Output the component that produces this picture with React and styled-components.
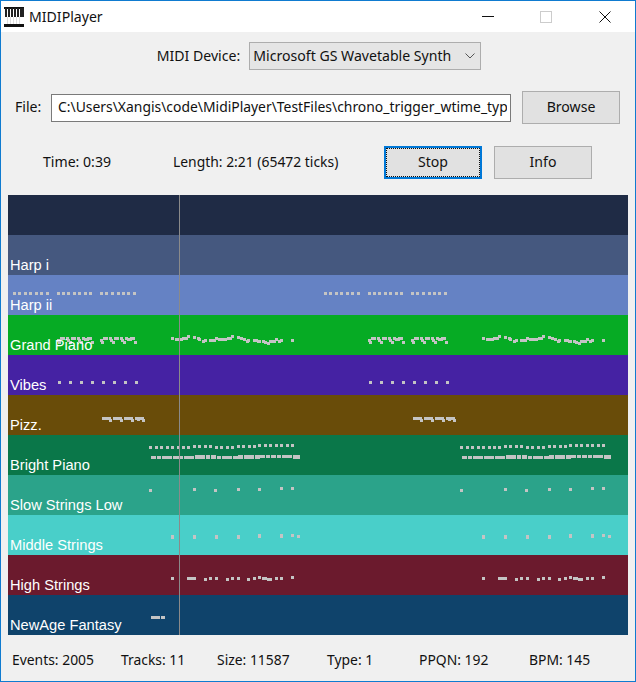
import React from "react"
import styled, { createGlobalStyle } from "styled-components"

const GlobalStyle = createGlobalStyle`
  html, body {
    margin: 0;
    padding: 0;
    background: #f0f0f0;
  }
  * {
    box-sizing: border-box;
  }
`

const single = (x, y) => ({ x, y })

const LOOP_SHIFT = 311

const gridNotes = (xs, y, w = 3, h = 3) => xs.map(x => ({ x, y, w, h }))

const harpNotes = gridNotes(
  [324, 329, 335, 340, 346, 351, 357, 368, 373, 378, 384, 389, 395, 400, 411, 416, 422, 428, 433, 438, 444],
  17
)

const vibesNotes = gridNotes([369, 380, 391, 402, 413, 424, 435, 446], 26)

const pianoRun = [
  single(368, 24), single(369, 26), { x: 371, y: 22, w: 5 }, single(377, 22),
  single(378, 24), single(380, 26), { x: 382, y: 22, w: 5 }, single(388, 22),
  single(389, 24), single(391, 26), single(393, 22), { x: 395, y: 23, w: 5 },
  { x: 398, y: 22, w: 5 }, single(402, 26),
]

const grandNotes = [
  ...pianoRun,
  ...pianoRun.map(n => ({ ...n, x: n.x + 43 })),
  single(482, 22), { x: 486, y: 23, w: 8 }, { x: 493, y: 22, w: 6 }, single(498, 20),
  single(504, 21), single(508, 22), single(509, 23), single(513, 25), single(515, 24),
  { x: 520, y: 24, w: 7 }, single(526, 22), { x: 529, y: 23, w: 9 }, { x: 538, y: 22, w: 5 },
  single(542, 20), single(548, 21), single(551, 22), single(554, 23), single(557, 25),
  single(558, 24), { x: 564, y: 24, w: 5 }, { x: 568, y: 25, w: 4 }, single(573, 25),
  single(575, 26), single(578, 27), { x: 580, y: 25, w: 7 }, single(586, 23),
  single(589, 25), single(591, 24), single(602, 24),
]

const pizzNotes = [
  { x: 413, y: 22, w: 9 }, single(420, 24), { x: 424, y: 22, w: 9 }, single(431, 24),
  { x: 435, y: 22, w: 9 }, single(442, 24), { x: 446, y: 22, w: 4 }, single(448, 23),
  { x: 450, y: 22, w: 5 }, single(453, 24),
]

const brightNotes = [
  ...gridNotes([460, 466, 471, 477, 482, 488, 493, 498], 11),
  ...gridNotes([504, 509, 515, 520], 10),
  ...gridNotes([526, 531, 537, 542], 11),
  ...gridNotes([548, 553, 559, 564], 10),
  ...gridNotes([569, 575, 580, 586, 591, 597, 602], 9),
  { x: 462, y: 21, w: 5 }, { x: 468, y: 21, w: 4 }, { x: 473, y: 21, w: 10 },
  { x: 484, y: 21, w: 10 }, { x: 495, y: 21, w: 10 }, { x: 506, y: 20, w: 10, h: 4 },
  { x: 517, y: 20, w: 4, h: 4 }, { x: 522, y: 20, w: 5, h: 4 }, { x: 528, y: 21, w: 4 },
  { x: 533, y: 21, w: 10 }, { x: 544, y: 21, w: 6 }, { x: 549, y: 20, w: 5, h: 4 },
  { x: 555, y: 20, w: 10, h: 4 }, { x: 566, y: 20, w: 5, h: 4 }, { x: 571, y: 20, w: 5 },
  { x: 577, y: 20, w: 4 }, { x: 582, y: 20, w: 5 }, { x: 588, y: 20, w: 4 },
  { x: 593, y: 20, w: 10 }, { x: 604, y: 20, w: 7, h: 4 },
]

const slowNotes = [
  single(460, 14), single(504, 13), single(525, 14), single(548, 13),
  single(569, 13), single(591, 12), single(602, 12),
]

const middleNotes = [
  { x: 482, y: 20, h: 4 }, { x: 504, y: 20, h: 4 }, { x: 526, y: 20, h: 4 },
  { x: 548, y: 20, h: 4 }, { x: 569, y: 19, h: 4 }, { x: 591, y: 19, h: 4 },
  single(602, 19), single(608, 20),
]

const highNotes = [
  single(482, 22), { x: 498, y: 22, w: 9 }, single(515, 23), single(520, 22), single(526, 22),
  single(537, 23), single(542, 22), single(548, 22), single(558, 23), single(564, 22),
  single(569, 21), { x: 573, y: 22, w: 5 }, { x: 578, y: 23, w: 5 }, single(586, 22),
  single(591, 22), single(602, 21),
]

const tracks = [
  { name: "", color: "#1f2b45", notes: [] },
  { name: "Harp i", color: "#45587f", notes: [] },
  { name: "Harp ii", color: "#6582c4", notes: harpNotes },
  { name: "Grand Piano", color: "#06ab24", notes: grandNotes },
  { name: "Vibes", color: "#4522a3", notes: vibesNotes },
  { name: "Pizz.", color: "#694c09", notes: pizzNotes },
  { name: "Bright Piano", color: "#0a7749", notes: brightNotes },
  { name: "Slow Strings Low", color: "#2ba38a", notes: slowNotes },
  { name: "Middle Strings", color: "#49cfc9", notes: middleNotes },
  { name: "High Strings", color: "#6b1a2d", notes: highNotes },
  {
    name: "NewAge Fantasy",
    color: "#0f436b",
    notes: [],
    extra: [{ x: 151, y: 21, w: 5 }, { x: 156, y: 21, w: 4 }, { x: 161, y: 21, w: 4 }],
  },
]

const stats = [
  { text: "Events: 2005", width: 109 },
  { text: "Tracks: 11", width: 96 },
  { text: "Size: 11587", width: 110 },
  { text: "Type: 1", width: 92 },
  { text: "PPQN: 192", width: 110 },
  { text: "BPM: 145", width: 90 },
]

const PianoIcon = () => (
  <svg width="20" height="20" viewBox="0 0 20 20">
    <rect x="0" y="0" width="20" height="20" fill="#fff" />
    <rect x="0" y="0" width="20" height="2" fill="#111" />
    <rect x="0" y="17" width="20" height="3" fill="#111" />
    {[1, 4, 7, 10, 13, 16, 18].map(x => (
      <rect key={x} x={x} y="1" width="2" height="9" fill="#222" />
    ))}
    {[3, 6, 9, 12, 15].map(x => (
      <rect key={x} x={x} y="10" width="1" height="7" fill="#ddd" />
    ))}
  </svg>
)

const CloseIcon = () => (
  <svg width="12" height="12" viewBox="0 0 12 12">
    <path d="M0.5 0.5 L11.5 11.5 M11.5 0.5 L0.5 11.5" stroke="#111" strokeWidth="1" fill="none" />
  </svg>
)

const Chevron = () => (
  <svg width="10" height="6" viewBox="0 0 10 6">
    <path d="M0.5 0.5 L5 5 L9.5 0.5" stroke="#555" strokeWidth="1" fill="none" />
  </svg>
)

const Notes = ({ notes }) => (
  <NoteLayer width="620" height="40" viewBox="8 0 620 40">
    {notes.map((n, i) => (
      <rect key={i} x={n.x} y={n.y} width={n.w || 3} height={n.h || 3} fill="#c4c4c4" />
    ))}
  </NoteLayer>
)

const App = () => {
  return (
    <Window>
      <GlobalStyle />
      <TitleBar>
        <AppIcon>
          <PianoIcon />
        </AppIcon>
        <Title>MIDIPlayer</Title>
        <WindowButtons>
          <WindowButton>
            <MinimizeLine />
          </WindowButton>
          <WindowButton>
            <MaximizeBox />
          </WindowButton>
          <WindowButton $wide>
            <CloseIcon />
          </WindowButton>
        </WindowButtons>
      </TitleBar>

      <Body>
        <DeviceRow>
          <Label>MIDI Device:</Label>
          <Select>
            <Label>Microsoft GS Wavetable Synth</Label>
            <Chevron />
          </Select>
        </DeviceRow>

        <FileRow>
          <FileLabel>File:</FileLabel>
          <PathInput
            readOnly
            value="C:\Users\Xangis\code\MidiPlayer\TestFiles\chrono_trigger_wtime_type1.mid"
          />
          <Button>Browse</Button>
        </FileRow>

        <TransportRow>
          <TimeText>Time: 0:39</TimeText>
          <LengthText>Length: 2:21 (65472 ticks)</LengthText>
          <Button $focused>Stop</Button>
          <Button>Info</Button>
        </TransportRow>

        <Roll>
          {tracks.map(track => (
            <Track key={track.color} $color={track.color}>
              <Notes
                notes={[
                  ...track.notes,
                  ...track.notes.map(n => ({ ...n, x: n.x - LOOP_SHIFT })),
                  ...(track.extra || []),
                ]}
              />
              <TrackName>{track.name}</TrackName>
            </Track>
          ))}
          <Playhead />
        </Roll>

        <StatusRow>
          {stats.map(s => (
            <Stat key={s.text} $width={s.width}>
              {s.text}
            </Stat>
          ))}
        </StatusRow>
      </Body>
    </Window>
  )
}

export default App

const Window = styled.div`
  width: 636px;
  height: 682px;
  display: flex;
  flex-direction: column;
  background: #f0f0f0;
  border: 1px solid #0f7bd0;
  font-family: "Noto Sans", "Open Sans", sans-serif;
  font-size: 14.1px;
  color: #111;
  overflow: hidden;
`

const TitleBar = styled.div`
  height: 31px;
  flex: none;
  display: flex;
  align-items: center;
  background: #fff;
`

const AppIcon = styled.div`
  display: flex;
  margin-left: 3px;
  margin-right: 5px;
`

const Title = styled.div`
  flex: 1;
`

const WindowButtons = styled.div`
  display: flex;
  height: 100%;
`

const WindowButton = styled.div`
  width: ${p => (p.$wide ? 60 : 58)}px;
  display: flex;
  align-items: center;
  justify-content: center;
`

const MinimizeLine = styled.div`
  width: 12px;
  height: 1px;
  background: #111;
`

const MaximizeBox = styled.div`
  width: 12px;
  height: 12px;
  border: 1px solid #ccc;
`

const Body = styled.div`
  flex: 1;
  display: flex;
  flex-direction: column;
  padding: 10px 7px 0;
`

const Label = styled.span`
  padding-bottom: 2px;
`

const DeviceRow = styled.div`
  height: 28px;
  display: flex;
  align-items: center;
  justify-content: center;
  gap: 9px;
  padding-left: 2px;
`

const Select = styled.div`
  width: 232px;
  height: 28px;
  display: flex;
  align-items: center;
  justify-content: space-between;
  padding: 0 5px 0 3px;
  background: #e5e5e5;
  border: 1px solid #adadad;
`

const FileRow = styled.div`
  height: 33px;
  margin-top: 21px;
  display: flex;
  align-items: center;
  padding-left: 7px;

  button {
    margin-left: 11px;
  }
`

const FileLabel = styled(Label)`
  width: 36px;
`

const PathInput = styled.input`
  width: 460px;
  height: 28px;
  padding: 0 3px 2px 6px;
  background: #fff;
  border: 1px solid #7a7a7a;
  border-radius: 0;
  outline: none;
  font: inherit;
  font-size: 13.9px;
  color: #111;
`

const Button = styled.button`
  position: relative;
  width: 98px;
  height: 33px;
  padding: 0 0 2px;
  background: #e1e1e1;
  border: ${p => (p.$focused ? "2px solid #0078d7" : "1px solid #adadad")};
  border-radius: 0;
  font: inherit;
  color: #111;
  outline: ${p => (p.$focused ? "1px dotted #111" : "none")};
  outline-offset: -3px;
`

const TransportRow = styled.div`
  height: 33px;
  margin-top: 22px;
  display: flex;
  align-items: center;
  padding-left: 35px;

  button + button {
    margin-left: 12px;
  }
`

const TimeText = styled.div`
  width: 130px;
  padding-bottom: 3px;
`

const LengthText = styled.div`
  width: 211px;
  padding-bottom: 3px;
  font-size: 13.9px;
`

const Roll = styled.div`
  position: relative;
  width: 620px;
  margin-top: 16px;
  flex: none;
  font-family: "Liberation Sans", Arial, sans-serif;
`

const Track = styled.div`
  position: relative;
  height: 40px;
  display: flex;
  align-items: flex-end;
  padding-left: 2px;
  background: ${p => p.$color};
`

const NoteLayer = styled.svg`
  position: absolute;
  left: 0;
  top: 0;
`

const TrackName = styled.div`
  position: relative;
  margin-bottom: 1px;
  font-size: 14.67px;
  line-height: 17px;
  color: #fff;
`

const Playhead = styled.div`
  position: absolute;
  left: 171px;
  top: 0;
  bottom: 0;
  width: 1px;
  background: #8a8a8a;
`

const StatusRow = styled.div`
  flex: 1;
  display: flex;
  align-items: center;
  padding: 2px 0 0 4px;
  font-size: 13.9px;
`

const Stat = styled.div`
  width: ${p => p.$width}px;
  flex: none;
`
